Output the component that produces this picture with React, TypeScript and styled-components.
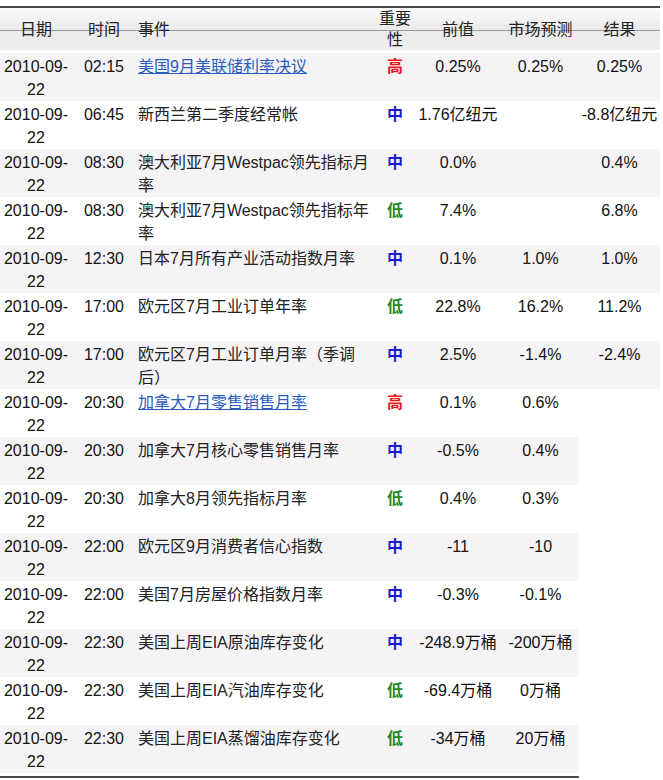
import * as React from 'react';
import styled, { createGlobalStyle } from 'styled-components';

type Level = 'high' | 'mid' | 'low';

interface EventRow {
    time: string;
    title: string;
    link?: boolean;
    level: Level;
    prev: string;
    forecast: string;
    result?: string;
}

const rows: EventRow[] = [
    { time: '02:15', title: '美国9月美联储利率决议', link: true, level: 'high', prev: '0.25%', forecast: '0.25%', result: '0.25%' },
    { time: '06:45', title: '新西兰第二季度经常帐', level: 'mid', prev: '1.76亿纽元', forecast: '', result: '-8.8亿纽元' },
    { time: '08:30', title: '澳大利亚7月Westpac领先指标月率', level: 'mid', prev: '0.0%', forecast: '', result: '0.4%' },
    { time: '08:30', title: '澳大利亚7月Westpac领先指标年率', level: 'low', prev: '7.4%', forecast: '', result: '6.8%' },
    { time: '12:30', title: '日本7月所有产业活动指数月率', level: 'mid', prev: '0.1%', forecast: '1.0%', result: '1.0%' },
    { time: '17:00', title: '欧元区7月工业订单年率', level: 'low', prev: '22.8%', forecast: '16.2%', result: '11.2%' },
    { time: '17:00', title: '欧元区7月工业订单月率（季调后）', level: 'mid', prev: '2.5%', forecast: '-1.4%', result: '-2.4%' },
    { time: '20:30', title: '加拿大7月零售销售月率', link: true, level: 'high', prev: '0.1%', forecast: '0.6%' },
    { time: '20:30', title: '加拿大7月核心零售销售月率', level: 'mid', prev: '-0.5%', forecast: '0.4%' },
    { time: '20:30', title: '加拿大8月领先指标月率', level: 'low', prev: '0.4%', forecast: '0.3%' },
    { time: '22:00', title: '欧元区9月消费者信心指数', level: 'mid', prev: '-11', forecast: '-10' },
    { time: '22:00', title: '美国7月房屋价格指数月率', level: 'mid', prev: '-0.3%', forecast: '-0.1%' },
    { time: '22:30', title: '美国上周EIA原油库存变化', level: 'mid', prev: '-248.9万桶', forecast: '-200万桶' },
    { time: '22:30', title: '美国上周EIA汽油库存变化', level: 'low', prev: '-69.4万桶', forecast: '0万桶' },
    { time: '22:30', title: '美国上周EIA蒸馏油库存变化', level: 'low', prev: '-34万桶', forecast: '20万桶' },
];

const levelText: Record<Level, string> = { high: '高', mid: '中', low: '低' };
const levelColor: Record<Level, string> = { high: '#e8161c', mid: '#1a1ad0', low: '#1e8a2a' };

const GlobalStyle = createGlobalStyle`
    body {
        margin: 0;
        background: #fff;
        font-family: "Liberation Sans", "Noto Sans CJK SC", sans-serif;
    }
`;

const Page = styled.div`
    width: 663px;
    padding-top: 6px;
`;

const Table = styled.table`
    width: 660px;
    table-layout: fixed;
    border-collapse: separate;
    border-spacing: 0;
    font-size: 16px;
    line-height: 23px;
    color: #111;
`;

const HeadCell = styled.th`
    height: 41px;
    padding: 0 3px;
    border-top: 2px solid #4a4a4a;
    border-bottom: 3px solid #fff;
    background: linear-gradient(
        to bottom,
        #fbfbfb 0px,
        #e9e9e9 22px,
        #9a9a9a 22px,
        #9a9a9a 23px,
        #ebebeb 23px,
        #eeeeee 100%
    );
    font-weight: normal;
    color: #222;
    text-align: center;
    vertical-align: middle;
    line-height: 21px;
`;

const EventHead = styled(HeadCell)`
    text-align: left;
    padding-left: 2px;
`;

const Cell = styled.td<{ $shade: boolean }>`
    height: 46px;
    padding: 2px 2px 0;
    background: ${(p) => (p.$shade ? '#f5f3f6' : '#fff')};
    text-align: center;
    vertical-align: top;
`;

const EventCell = styled(Cell)`
    text-align: left;
    color: #222;
`;

const LevelCell = styled(Cell)<{ $level: Level }>`
    font-weight: bold;
    color: ${(p) => levelColor[p.$level]};
`;

const EventLink = styled.a`
    color: #2a5cbf;
    text-decoration: underline;
    cursor: pointer;
`;

const FootRule = styled.td`
    height: 3px;
    padding: 0;
    border-bottom: 2px solid #4a4a4a;
`;

const Row: React.FC<{ row: EventRow; shade: boolean }> = ({ row, shade }) => (
    <tr>
        <Cell $shade={shade}>
            2010-09-
            <wbr />
            22
        </Cell>
        <Cell $shade={shade}>{row.time}</Cell>
        <EventCell $shade={shade}>
            {row.link ? <EventLink>{row.title}</EventLink> : row.title}
        </EventCell>
        <LevelCell $shade={shade} $level={row.level}>
            {levelText[row.level]}
        </LevelCell>
        <Cell $shade={shade}>{row.prev}</Cell>
        <Cell $shade={shade}>{row.forecast}</Cell>
        {row.result !== undefined && <Cell $shade={shade}>{row.result}</Cell>}
    </tr>
);

export default function App() {
    return (
        <>
            <GlobalStyle />
            <Page>
                <Table>
                    <colgroup>
                        <col style={{ width: 72 }} />
                        <col style={{ width: 64 }} />
                        <col style={{ width: 240 }} />
                        <col style={{ width: 38 }} />
                        <col style={{ width: 88 }} />
                        <col style={{ width: 77 }} />
                        <col style={{ width: 81 }} />
                    </colgroup>
                    <thead>
                        <tr>
                            <HeadCell>日期</HeadCell>
                            <HeadCell>时间</HeadCell>
                            <EventHead>事件</EventHead>
                            <HeadCell>重要性</HeadCell>
                            <HeadCell>前值</HeadCell>
                            <HeadCell>市场预测</HeadCell>
                            <HeadCell>结果</HeadCell>
                        </tr>
                    </thead>
                    <tbody>
                        {rows.map((row, i) => (
                            <Row key={i} row={row} shade={i % 2 === 0} />
                        ))}
                        <tr>
                            <FootRule colSpan={6} />
                        </tr>
                    </tbody>
                </Table>
            </Page>
        </>
    );
}
